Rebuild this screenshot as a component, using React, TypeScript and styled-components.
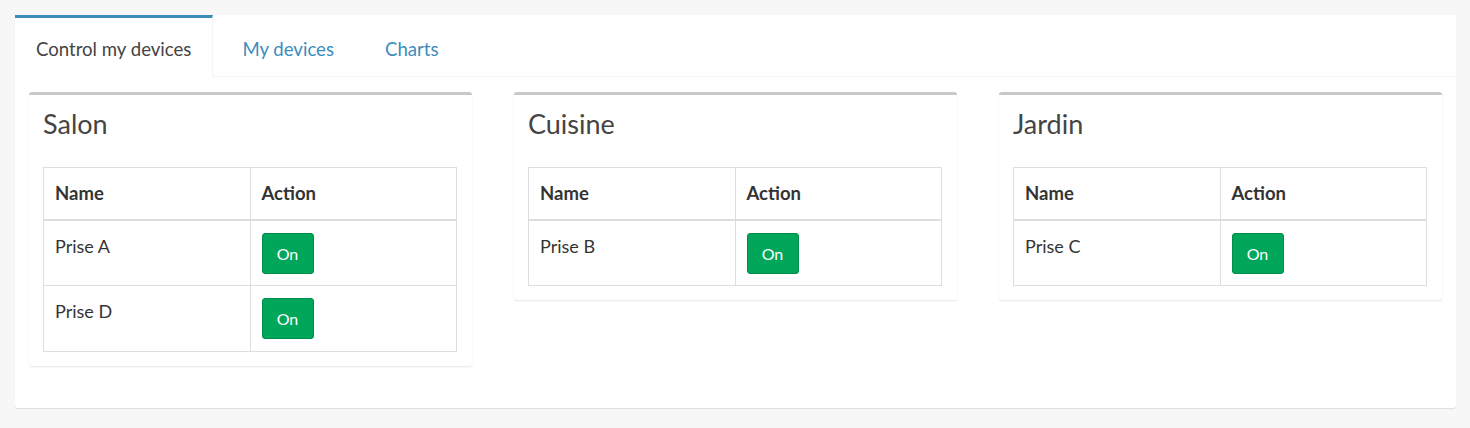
import React from "react";
import styled, { createGlobalStyle } from "styled-components";

const Global = createGlobalStyle`
  html, body { margin: 0; padding: 0; background: #f7f7f7; }
  body { font-family: "Lato", "Liberation Sans", sans-serif; color: #333; }
  * { box-sizing: border-box; }
`;

const Page = styled.div`
  padding: 15px 14px 19px 15px;
`;

const TabsPanel = styled.div`
  background: #fff;
  box-shadow: 0 1px 1px rgba(0, 0, 0, 0.1);
  border-radius: 3px;
`;

const TabBar = styled.ul`
  display: flex;
  margin: 0;
  padding: 0;
  list-style: none;
  border-bottom: 1px solid #f4f4f4;
  height: 62px;
`;

const TabItem = styled.li<{ $active?: boolean }>`
  margin-right: 8px;
  margin-bottom: -1px;
  border-top: 3px solid ${(p) => (p.$active ? "#3c8dbc" : "transparent")};
  background: ${(p) => (p.$active ? "#fff" : "transparent")};
  border-right: 1px solid ${(p) => (p.$active ? "#f4f4f4" : "transparent")};
`;

const TabLink = styled.a<{ $active?: boolean }>`
  display: block;
  padding: 2px 21px 0 21px;
  height: 58px;
  line-height: 58px;
  font-size: 18.6px;
  color: ${(p) => (p.$active ? "#444" : "#3c8dbc")};
  text-decoration: none;
  cursor: pointer;
`;

const TabContent = styled.div`
  display: grid;
  grid-template-columns: repeat(3, 443px);
  column-gap: 42px;
  align-items: start;
  padding: 15px 14px 14px 14px;
`;

const Box = styled.div`
  background: #fff;
  border-top: 3px solid #c8c8c8;
  border-radius: 3px;
  box-shadow: 0 1px 2px rgba(0, 0, 0, 0.1);
  margin-bottom: 28px;
  padding: 0 15px 14px 14px;
`;

const BoxTitle = styled.h3`
  margin: 0;
  padding: 13px 0 0 0;
  height: 72px;
  font-size: 27px;
  font-weight: 400;
  line-height: 32px;
  color: #444;
`;

const Table = styled.table`
  width: 100%;
  border-collapse: collapse;
  border: 1px solid #dedede;
  table-layout: fixed;
  font-size: 18px;
`;

const Th = styled.th`
  text-align: left;
  font-weight: 700;
  font-size: 18.5px;
  color: #333;
  padding: 11px 11px;
  height: 52px;
  border: 1px solid #dedede;
  border-bottom: 2px solid #dedede;
  vertical-align: middle;
`;

const Td = styled.td`
  padding: 12px 11px 11px 11px;
  border: 1px solid #dedede;
  vertical-align: top;
  color: #333;
  line-height: 28px;
  height: 66px;
`;

const NameCell = styled.span`
  display: block;
  margin-top: -1px;
`;

const OnButton = styled.button`
  display: inline-block;
  width: 52px;
  height: 41px;
  margin-top: 0;
  padding: 0;
  background: #00a65a;
  border: 1px solid #008d4c;
  border-radius: 3px;
  color: #fff;
  font-family: inherit;
  font-size: 16px;
  cursor: pointer;
`;

type Room = { name: string; devices: string[] };

const rooms: Room[] = [
  { name: "Salon", devices: ["Prise A", "Prise D"] },
  { name: "Cuisine", devices: ["Prise B"] },
  { name: "Jardin", devices: ["Prise C"] },
];

const tabs = ["Control my devices", "My devices", "Charts"];

export default function App() {
  return (
    <>
      <Global />
      <Page>
        <TabsPanel>
          <TabBar>
            {tabs.map((t, i) => (
              <TabItem key={t} $active={i === 0}>
                <TabLink $active={i === 0}>{t}</TabLink>
              </TabItem>
            ))}
          </TabBar>
          <TabContent>
            {rooms.map((r) => (
              <Box key={r.name}>
                <BoxTitle>{r.name}</BoxTitle>
                <Table>
                  <thead>
                    <tr>
                      <Th>Name</Th>
                      <Th>Action</Th>
                    </tr>
                  </thead>
                  <tbody>
                    {r.devices.map((d) => (
                      <tr key={d}>
                        <Td>
                          <NameCell>{d}</NameCell>
                        </Td>
                        <Td>
                          <OnButton>On</OnButton>
                        </Td>
                      </tr>
                    ))}
                  </tbody>
                </Table>
              </Box>
            ))}
          </TabContent>
        </TabsPanel>
      </Page>
    </>
  );
}
